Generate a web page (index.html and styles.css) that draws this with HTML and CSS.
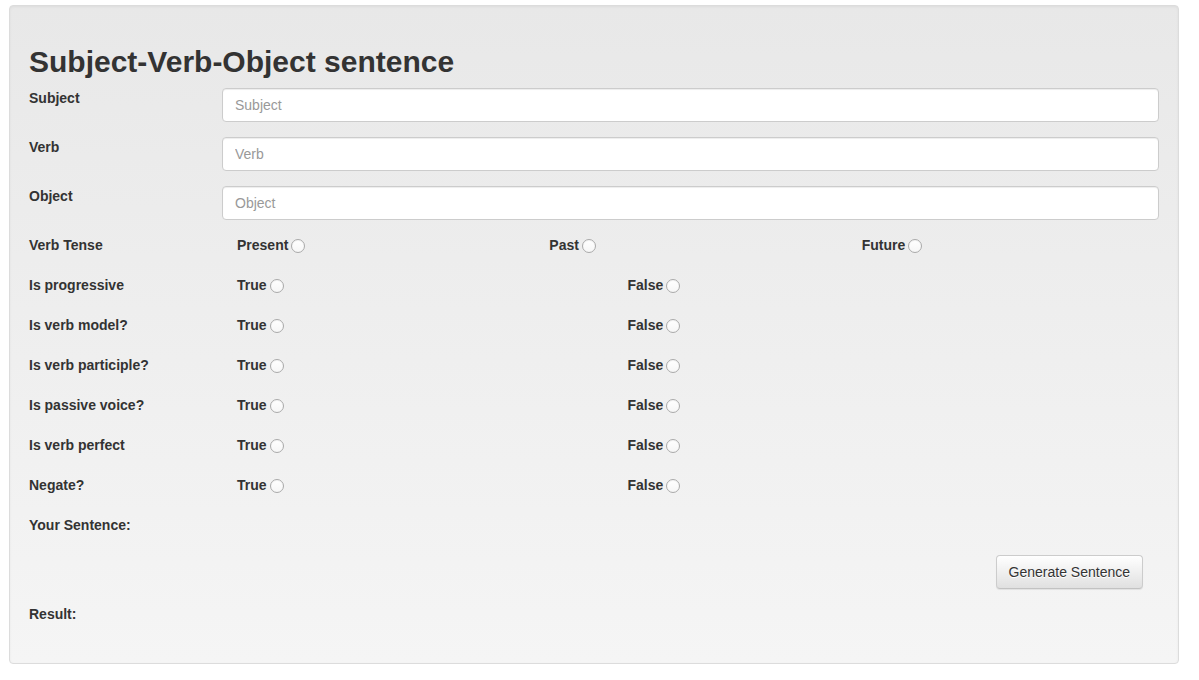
FILE: index.html
```html
<!DOCTYPE html>
<html lang="en">
<head>
<meta charset="utf-8">
<title>Subject-Verb-Object sentence</title>
<link rel="stylesheet" href="styles.css">
</head>
<body>
<div class="well">
  <h1 class="title">Subject-Verb-Object sentence</h1>

  <div class="frow">
    <label class="lbl" for="subject">Subject</label>
    <input class="ctrl" id="subject" type="text" placeholder="Subject">
  </div>
  <div class="frow">
    <label class="lbl" for="verb">Verb</label>
    <input class="ctrl" id="verb" type="text" placeholder="Verb">
  </div>
  <div class="frow">
    <label class="lbl" for="object">Object</label>
    <input class="ctrl" id="object" type="text" placeholder="Object">
  </div>

  <div class="rrow">
    <span class="lbl">Verb Tense</span>
    <div class="opts three">
      <label class="opt">Present<input class="radio" type="radio" name="tense"></label>
      <label class="opt">Past<input class="radio" type="radio" name="tense"></label>
      <label class="opt">Future<input class="radio" type="radio" name="tense"></label>
    </div>
  </div>
  <div class="rrow">
    <span class="lbl">Is progressive</span>
    <div class="opts two">
      <label class="opt">True<input class="radio" type="radio" name="prog"></label>
      <label class="opt">False<input class="radio" type="radio" name="prog"></label>
    </div>
  </div>
  <div class="rrow">
    <span class="lbl">Is verb model?</span>
    <div class="opts two">
      <label class="opt">True<input class="radio" type="radio" name="model"></label>
      <label class="opt">False<input class="radio" type="radio" name="model"></label>
    </div>
  </div>
  <div class="rrow">
    <span class="lbl">Is verb participle?</span>
    <div class="opts two">
      <label class="opt">True<input class="radio" type="radio" name="part"></label>
      <label class="opt">False<input class="radio" type="radio" name="part"></label>
    </div>
  </div>
  <div class="rrow">
    <span class="lbl">Is passive voice?</span>
    <div class="opts two">
      <label class="opt">True<input class="radio" type="radio" name="passive"></label>
      <label class="opt">False<input class="radio" type="radio" name="passive"></label>
    </div>
  </div>
  <div class="rrow">
    <span class="lbl">Is verb perfect</span>
    <div class="opts two">
      <label class="opt">True<input class="radio" type="radio" name="perfect"></label>
      <label class="opt">False<input class="radio" type="radio" name="perfect"></label>
    </div>
  </div>
  <div class="rrow">
    <span class="lbl">Negate?</span>
    <div class="opts two">
      <label class="opt">True<input class="radio" type="radio" name="negate"></label>
      <label class="opt">False<input class="radio" type="radio" name="negate"></label>
    </div>
  </div>

  <div class="line lbl">Your Sentence:</div>

  <div class="actions">
    <button class="btn" type="button">Generate Sentence</button>
  </div>

  <div class="line lbl result">Result:</div>
</div>
</body>
</html>
```

FILE: styles.css
```css
html, body {
  margin: 0;
  padding: 0;
  background: #fff;
}

body {
  padding: 5px 20px 16px 9px;
  font-family: "Liberation Sans", Arial, Helvetica, sans-serif;
  font-size: 14px;
  line-height: 20px;
  color: #333;
}

.well {
  box-sizing: border-box;
  width: 1170px;
  padding: 19px;
  border: 1px solid #dcdcdc;
  border-radius: 4px;
  background: linear-gradient(to bottom, #e8e8e8 0%, #f5f5f5 100%);
  box-shadow: inset 0 1px 3px rgba(0, 0, 0, 0.05), 0 1px 0 rgba(255, 255, 255, 0.1);
}

.title {
  margin: 20px 0 10px;
  font-size: 30px;
  line-height: 33px;
  font-weight: bold;
  color: #333;
}

.lbl {
  font-weight: bold;
  font-size: 14px;
  line-height: 20px;
  color: #333;
}

.frow {
  display: flex;
  align-items: flex-start;
  margin-bottom: 15px;
}

.frow .lbl {
  flex: 0 0 193px;
}

.ctrl {
  flex: 1 1 auto;
  box-sizing: border-box;
  height: 34px;
  margin: 0;
  padding: 6px 12px;
  border: 1px solid #ccc;
  border-radius: 4px;
  background: #fff;
  box-shadow: inset 0 1px 1px rgba(0, 0, 0, 0.075);
  font-family: inherit;
  font-size: 14px;
  line-height: 20px;
  color: #555;
  outline: none;
}

.ctrl::placeholder {
  color: #999;
}

.rrow {
  display: flex;
  align-items: flex-start;
  height: 20px;
  margin-bottom: 20px;
}

.rrow .lbl {
  flex: 0 0 193px;
}

.opts {
  flex: 1 1 auto;
  display: grid;
}

.opts.three {
  grid-template-columns: repeat(3, 1fr);
}

.opts.two {
  grid-template-columns: 5fr 5fr 2fr;
}

.opt {
  padding-left: 15px;
  font-weight: bold;
  white-space: nowrap;
}

.radio {
  -webkit-appearance: none;
  appearance: none;
  box-sizing: border-box;
  display: inline-block;
  width: 14px;
  height: 14px;
  margin: 0 0 0 3px;
  vertical-align: -3px;
  border: 1px solid #aaa;
  border-radius: 50%;
  background: linear-gradient(to bottom, #ffffff 0%, #f6f6f6 100%);
  box-shadow: inset 0 1px 1px rgba(0, 0, 0, 0.05);
}

.line {
  height: 20px;
}

.actions {
  display: flex;
  justify-content: flex-end;
  padding-right: 16px;
  margin-top: 20px;
}

.btn {
  box-sizing: border-box;
  height: 34px;
  padding: 6px 12px;
  border: 1px solid #ccc;
  border-bottom-color: #c2c2c2;
  border-radius: 4px;
  background: linear-gradient(to bottom, #ffffff 0%, #e0e0e0 100%);
  box-shadow: inset 0 1px 0 rgba(255, 255, 255, 0.15), 0 1px 1px rgba(0, 0, 0, 0.075);
  font-family: inherit;
  font-size: 14px;
  line-height: 20px;
  color: #333;
  text-shadow: 0 1px 0 #fff;
  cursor: pointer;
}

.result {
  margin-top: 15px;
  margin-bottom: 20px;
}
```
